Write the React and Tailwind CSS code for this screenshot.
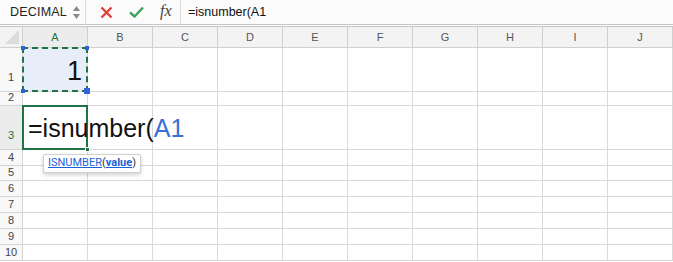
import React from "react";

const cols = ["A", "B", "C", "D", "E", "F", "G", "H", "I", "J"];
const rows = [1, 2, 3, 4, 5, 6, 7, 8, 9, 10];

function Cell({ row, col }) {
  if (row === 1 && col === "A") {
    return (
      <div className="relative bg-[#e8eef9] border-r border-b border-[#d9d9d9] flex items-center justify-end pr-[5px]">
        <span className="text-[27px] leading-none text-[#111] pt-[4px]">1</span>
        <div className="absolute -inset-[1px] border-2 border-dashed border-[#217346]" />
        <div className="absolute -left-[2px] -top-[2px] w-[4px] h-[4px] bg-[#2f63d6]" />
        <div className="absolute -right-[2px] -top-[2px] w-[4px] h-[4px] bg-[#2f63d6]" />
        <div className="absolute -left-[2px] -bottom-[2px] w-[4px] h-[4px] bg-[#2f63d6]" />
        <div className="absolute -right-[3px] -bottom-[3px] w-[6px] h-[6px] bg-[#2f63d6]" />
      </div>
    );
  }
  if (row === 3 && col === "A") {
    return (
      <div className="relative z-10 border-r border-b border-[#d9d9d9] flex items-center">
        <div className="absolute -inset-[1px] border-2 border-[#217346] bg-white" />
        <span className="relative pl-[5px] pt-[2px] text-[25px] leading-none whitespace-nowrap text-[#111]">
          =isnumber(<span className="text-[#3a6fd6]">A1</span>
        </span>
        <div className="absolute -right-[3px] -bottom-[3px] w-[5px] h-[5px] bg-[#217346] border border-white" />
      </div>
    );
  }
  return <div className="border-r border-b border-[#d9d9d9] bg-white" />;
}

export default function App() {
  return (
    <div className="w-[673px] h-[262px] bg-white overflow-hidden font-['Liberation_Sans',Arial,sans-serif]">
      {/* formula bar */}
      <div className="h-[25px] flex items-center bg-[#fbfbfb] border-b border-[#c4c4c4]">
        <div className="w-[86px] h-full flex items-center justify-between pl-[10px] pr-[5px] border-r border-[#dcdcdc]">
          <span className="text-[12.5px] text-[#222] tracking-[0.2px]">DECIMAL</span>
          <div className="flex flex-col gap-[3px] items-center">
            <svg width="7" height="5" viewBox="0 0 7 5"><path d="M3.5 0L7 5H0z" fill="#8a8a8a" /></svg>
            <svg width="7" height="5" viewBox="0 0 7 5"><path d="M0 0h7L3.5 5z" fill="#8a8a8a" /></svg>
          </div>
        </div>
        <div className="flex items-center gap-[16px] pl-[14px] w-[95px] h-full border-r border-[#dcdcdc]">
          <svg width="13" height="13" viewBox="0 0 13 13">
            <path d="M1.5 1.5L11.5 11.5M11.5 1.5L1.5 11.5" stroke="#e2403b" strokeWidth="2.4" />
          </svg>
          <svg width="15" height="12" viewBox="0 0 15 12">
            <path d="M1 6.5L5.5 10.5L14 1.5" stroke="#3ea35a" strokeWidth="2.4" fill="none" />
          </svg>
          <span className="italic text-[16px] text-[#444] font-['Liberation_Serif',serif] leading-none -mt-[2px]">fx</span>
        </div>
        <span className="pl-[7px] text-[12.5px] text-[#111]">=isnumber(A1</span>
      </div>
      <div className="h-[2px] bg-white border-b border-[#c4c4c4]" />

      {/* sheet */}
      <div className="relative grid grid-cols-[23px_repeat(10,65px)] grid-rows-[21px_44px_14px_44px_16px_15px_16px_16px_16px_16px_16px]">
        <div className="relative bg-[#f3f3f3] border-r border-b border-[#cfcfcf] overflow-hidden">
          <svg className="absolute right-[3px] bottom-[3px]" width="14" height="14" viewBox="0 0 14 14">
            <path d="M14 0V14H0z" fill="#dcdcdc" />
          </svg>
        </div>
        {cols.map((c) => (
          <div
            key={c}
            className={
              "flex items-center justify-center text-[11px] border-r border-b border-[#cfcfcf] " +
              (c === "A" ? "bg-[#ececec] text-[#217346]" : "bg-[#f3f3f3] text-[#555]")
            }
          >
            {c}
          </div>
        ))}
        {rows.map((r) => (
          <React.Fragment key={r}>
            <div
              className={
                "flex items-end justify-center text-[11px] leading-none border-r border-b border-[#d4d4d4] " +
                (r === 3 ? "bg-[#ececec] text-[#217346]" : "bg-[#f8f8f8] text-[#444]") +
                (r === 1 || r === 3 ? " pb-[8px]" : " pb-[2px]")
              }
            >
              {r}
            </div>
            {cols.map((c) => (
              <Cell key={c} row={r} col={c} />
            ))}
          </React.Fragment>
        ))}

        {/* function tooltip */}
        <div className="absolute z-20 left-[43px] top-[127px] h-[19px] px-[4px] flex items-center bg-white border border-[#d0d0d0] rounded-[2px] shadow-[0_2px_4px_rgba(0,0,0,0.18)] text-[11px] font-['Roboto',Arial,sans-serif]">
          <span className="text-[#1a62d6] underline">ISNUMBER</span>
          <span className="text-[#333]">(</span>
          <span className="text-[#1a62d6] underline font-bold">value</span>
          <span className="text-[#333]">)</span>
        </div>
      </div>
    </div>
  );
}
